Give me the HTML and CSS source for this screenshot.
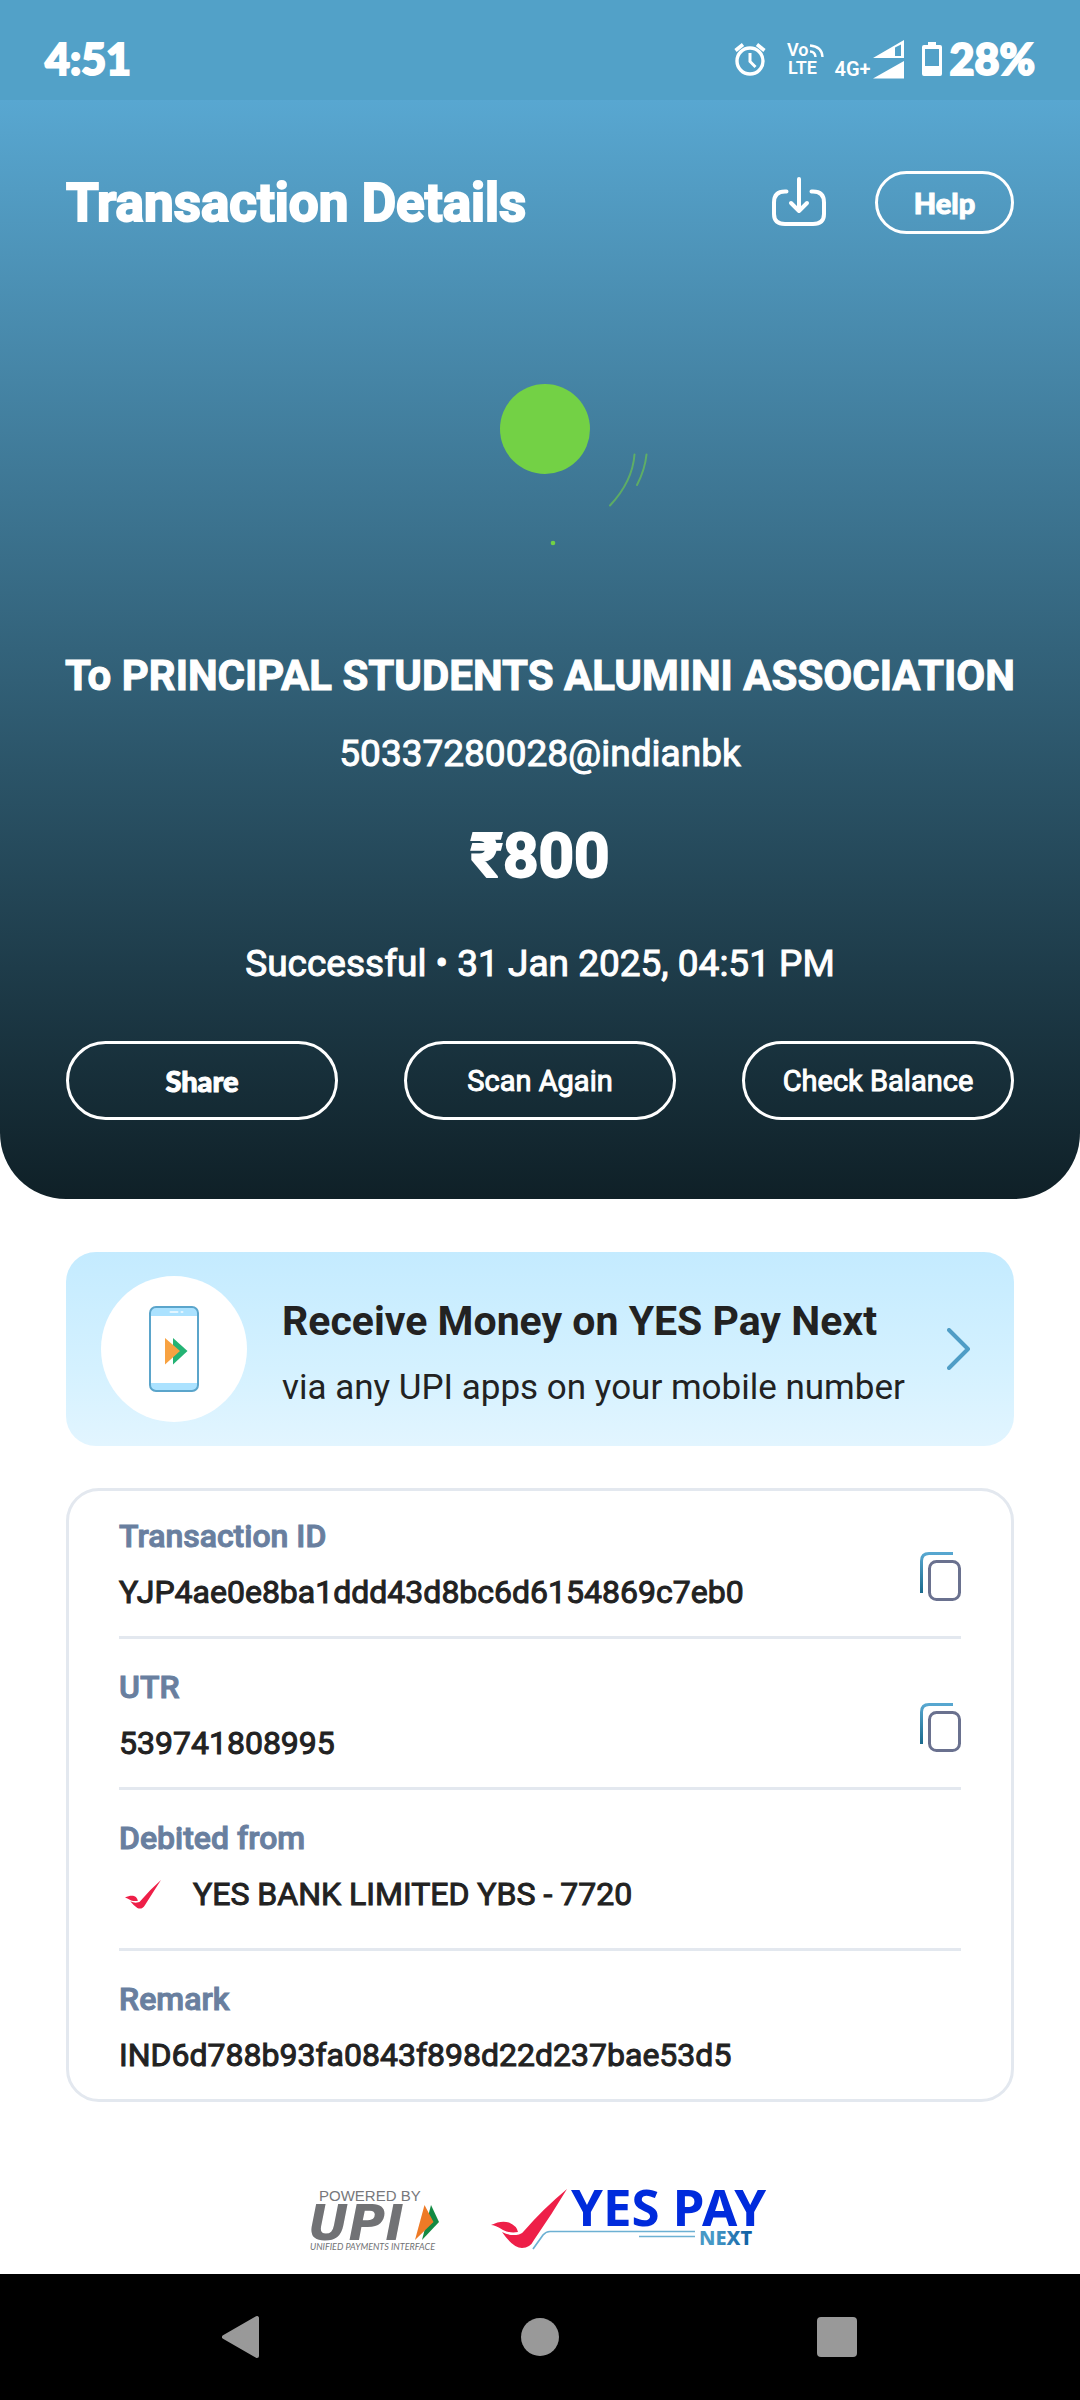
FILE: index.html
```html
<!DOCTYPE html>
<html lang="en">
<head>
<meta charset="utf-8">
<meta name="viewport" content="width=device-width, initial-scale=1">
<title>Transaction Details</title>
<link rel="stylesheet" href="styles.css">
</head>
<body>
<div class="status-bar">
  <span class="status-time">4:51</span>
  <div class="status-icons">
    <svg class="icon-alarm" viewBox="0 0 32 34" width="32" height="34" fill="none" stroke="#fff" aria-hidden="true">
      <circle cx="16" cy="19" r="13" stroke-width="3.4"/>
      <path d="M16 11v8.500l5.500 5.500" stroke-width="3"/>
      <path d="M1.500 8.500l7.500-6M30.500 8.500l-7.500-6" stroke-width="3.600"/>
    </svg>
    <svg class="icon-volte" viewBox="0 0 37 36" width="37" height="36" aria-hidden="true">
      <g fill="#fff" class="volte-text"><text x="0" y="15">Vo</text><text x="1" y="33">LTE</text></g>
      <g fill="none" stroke="#fff" stroke-width="2.400"><path d="M23 10.500q5 0 5.500 5.500M23 4.500q12 1 12.500 11.500"/></g>
    </svg>
    <span class="network">4G+</span>
    <svg class="icon-signal" viewBox="0 0 31 39" width="31" height="39" aria-hidden="true">
      <path fill="#fff" fill-rule="evenodd" d="M0 18L31 0v18zM22 7.500V16h6V4.500zM0 38.500L31 21v17.500z"/>
    </svg>
    <svg class="icon-battery" viewBox="0 0 20 34" width="20" height="34" aria-hidden="true">
      <path fill="#fff" fill-rule="evenodd" d="M6 0h8v3h4a2 2 0 0 1 2 2v27a2 2 0 0 1-2 2H2a2 2 0 0 1-2-2V5a2 2 0 0 1 2-2h4zM3 7v17h14V7z"/>
    </svg>
    <span class="battery-level">28%</span>
  </div>
</div>

<header class="hero">
  <div class="title-row">
    <h1 class="title">Transaction Details</h1>
    <button class="icon-button" type="button" aria-label="Download receipt">
      <svg viewBox="0 0 54 50" width="54" height="50" fill="none" stroke="#fff" stroke-width="4" stroke-linecap="round" stroke-linejoin="round" aria-hidden="true">
        <path d="M14.500 14.500H13q-11 0-11 11V37q0 10 11 10h28q11 0 11-10V25.500q0-11-11-11h-1.500"/>
        <path d="M27 2v32M19 26l8 8 8-8"/>
      </svg>
    </button>
    <button class="pill pill-help" type="button">Help</button>
  </div>

  <svg class="burst" viewBox="0 0 240 200" width="240" height="200" aria-hidden="true">
    <circle cx="125" cy="69" r="45" fill="#73d145"/>
    <g fill="none" stroke="#73d145" stroke-opacity=".6" stroke-width="2" stroke-linecap="round">
      <path d="M214.500 94.500q-2 27-24.500 51"/>
      <path d="M226.500 94.500q-1.500 15-9.500 30.500"/>
    </g>
    <circle cx="133" cy="183" r="2.300" fill="#73d145"/>
  </svg>

  <p class="payee">To PRINCIPAL STUDENTS ALUMINI ASSOCIATION</p>
  <p class="vpa">50337280028@indianbk</p>
  <p class="amount">₹800</p>
  <p class="status">Successful • 31 Jan 2025, 04:51 PM</p>

  <div class="actions">
    <button class="pill pill-strong" type="button">Share</button>
    <button class="pill" type="button">Scan Again</button>
    <button class="pill" type="button">Check Balance</button>
  </div>
</header>

<main class="content">
  <a class="promo" href="#receive">
    <span class="promo-badge">
      <svg viewBox="0 0 50 86" width="50" height="86" aria-hidden="true">
        <rect x="1" y="1" width="48" height="84" rx="6" fill="#abe2ff"/>
        <path fill="#fff" d="M1 10h48v67H1z"/>
        <rect x="1" y="1" width="48" height="84" rx="6" fill="none" stroke="#5ba5cb" stroke-width="2"/>
        <path d="M21.500 6h7M32.500 6h1" stroke="#e2f5ff" stroke-width="2" stroke-linecap="round"/>
        <path fill="#24b374" d="M24 32l14.500 13L24 58.500z"/>
        <path fill="#f8a241" d="M16 32l15 13-15 13.500z"/>
      </svg>
    </span>
    <span class="promo-text">
      <strong class="promo-title">Receive Money on YES Pay Next</strong>
      <span class="promo-sub">via any UPI apps on your mobile number</span>
    </span>
    <svg class="chevron" viewBox="0 0 24 42" width="24" height="42" fill="none" stroke="#4f9dc6" stroke-width="4" stroke-linecap="round" stroke-linejoin="round" aria-hidden="true"><path d="M2 2l19 19L2 40"/></svg>
  </a>

  <svg class="defs" width="0" height="0" aria-hidden="true">
    <linearGradient id="fold" x1="0" y1="0" x2="0" y2="1"><stop offset="0" stop-color="#57a7d0"/><stop offset="1" stop-color="#1b6a8c"/></linearGradient>
  </svg>

  <dl class="details">
    <div class="detail">
      <div>
        <dt>Transaction ID</dt>
        <dd>YJP4ae0e8ba1ddd43d8bc6d6154869c7eb0</dd>
      </div>
      <button class="icon-button" type="button" aria-label="Copy transaction ID">
        <svg viewBox="0 0 41 49" width="41" height="49" fill="none" stroke-width="3" aria-hidden="true">
          <path stroke="url(#fold)" d="M1.500 41V9q0-7.500 7.500-7.500h24"/>
          <rect x="9.500" y="9.500" width="30" height="38" rx="7" stroke="#6a718f"/>
        </svg>
      </button>
    </div>
    <div class="detail">
      <div>
        <dt>UTR</dt>
        <dd>539741808995</dd>
      </div>
      <button class="icon-button" type="button" aria-label="Copy UTR">
        <svg viewBox="0 0 41 49" width="41" height="49" fill="none" stroke-width="3" aria-hidden="true">
          <path stroke="url(#fold)" d="M1.500 41V9q0-7.500 7.500-7.500h24"/>
          <rect x="9.500" y="9.500" width="30" height="38" rx="7" stroke="#6a718f"/>
        </svg>
      </button>
    </div>
    <div class="detail detail-bank">
      <div>
        <dt>Debited from</dt>
        <dd class="bank">
          <svg class="bank-logo" viewBox="0 0 76 61" width="36" height="29" aria-hidden="true"><path fill="#ee1f48" d="M0 37C10 32 18 32 23 36q4 4 4 8-8 1-14-1Q4 38 0 37zM11 45q9 4 17 2 3 0 4-2Q52 21 76 0 58 28 42 53q-6 10-16 6-7-4-15-14z"/></svg>
          YES BANK LIMITED YBS - 7720
        </dd>
      </div>
    </div>
    <div class="detail">
      <div>
        <dt>Remark</dt>
        <dd>IND6d788b93fa0843f898d22d237bae53d5</dd>
      </div>
    </div>
  </dl>
</main>

<footer class="brands">
  <svg viewBox="0 0 130 62" width="130" height="62" role="img" aria-label="Powered by UPI, Unified Payments Interface">
    <text class="powered" x="9" y="12">POWERED BY</text>
    <text class="upi" x="-2" y="51">UPI</text>
    <path fill="#138a43" d="M121 16l8 17-17 18z"/>
    <path fill="#ee7a26" d="M114.500 16l9 17L105 51z"/>
    <text class="upi-full" x="0" y="61">UNIFIED PAYMENTS INTERFACE</text>
  </svg>
  <svg viewBox="0 0 278 62" width="278" height="62" role="img" aria-label="Yes Pay Next">
    <linearGradient id="next" x1="0" x2="1" y1="0" y2="0"><stop offset=".3" stop-color="#4799c6"/><stop offset="1" stop-color="#0a5aa0"/></linearGradient>
    <path fill="#ee1f48" d="M0 36Q10 31 18 33.500 26 37 27 43q-8 1.500-15-2Q4 36 0 36zM11 43q8 4.500 17 2.500 3-.5 5-3.500Q52 20 76 0 61 25 43 51q-4 8-12 8-9 0-20-16z"/>
    <path fill="none" stroke="#6db1d3" stroke-width="1.700" d="M42 60l10-14q3-3.500 7-3.500h145M148 47.500h56"/>
    <text class="yes-pay" x="80" y="37">YES PAY</text>
    <text class="next" x="208" y="56" fill="url(#next)">NEXT</text>
  </svg>
</footer>

<nav class="nav-bar">
  <button class="icon-button" type="button" aria-label="Back"><svg viewBox="0 0 42 44" width="42" height="44" aria-hidden="true"><path fill="#999" stroke="#999" stroke-width="4" stroke-linejoin="round" d="M2 22L35 3v38z"/></svg></button>
  <button class="icon-button" type="button" aria-label="Home"><svg viewBox="0 0 42 44" width="42" height="44" aria-hidden="true"><circle cx="21" cy="22" r="19" fill="#999"/></svg></button>
  <button class="icon-button" type="button" aria-label="Recent apps"><svg viewBox="0 0 42 44" width="42" height="44" aria-hidden="true"><rect x="1" y="2" width="40" height="40" rx="4" fill="#999"/></svg></button>
</nav>
</body>
</html>
```

FILE: styles.css
```css
* {
  box-sizing: border-box;
}

body {
  margin: 0;
  min-height: 100vh;
  display: flex;
  flex-direction: column;
  background: #fff;
  color: #222;
  font-family: Roboto, "Liberation Sans", sans-serif;
}

h1, p, dl, dd {
  margin: 0;
}

svg {
  display: block;
}

button {
  padding: 0;
  border: 0;
  background: none;
  color: inherit;
  font: inherit;
}

.defs {
  position: absolute;
}

/* Status bar */

.status-bar {
  display: flex;
  align-items: center;
  justify-content: space-between;
  height: 100px;
  padding: 18px 45px 0;
  background: #52a1c8;
  color: #fff;
}

.status-time,
.battery-level {
  font: 900 43px/50px Lato, sans-serif;
  -webkit-text-stroke: 2px;
}

.status-icons {
  display: flex;
  align-items: center;
}

.icon-volte {
  margin-left: 21px;
  overflow: visible;
}

.volte-text {
  font: 600 18px/18px Roboto, sans-serif;
}

.network {
  margin-left: 10px;
  padding-top: 20px;
  font: 600 20px/24px Roboto, sans-serif;
}

.icon-signal {
  margin-left: 2px;
}

.icon-battery {
  margin: 0 8px 0 18px;
}

/* Header */

.hero {
  display: flex;
  flex-direction: column;
  align-items: center;
  padding: 70px 66px 79px;
  border-radius: 0 0 66px 66px;
  background: linear-gradient(#58a7d1, #2b5468 61%, #0f2027);
  color: #fff;
  text-align: center;
}

.title-row {
  display: flex;
  align-items: center;
  align-self: stretch;
}

.title {
  flex: 1;
  padding-top: 2px;
  text-align: left;
  font-size: 53px;
  line-height: 62px;
  font-weight: 700;
  -webkit-text-stroke: 2px;
}

.pill {
  flex: 1;
  height: 79px;
  border: 3px solid #fff;
  border-radius: 40px;
  font-size: 29px;
  -webkit-text-stroke: 1px;
}

.pill-strong,
.pill-help {
  font-family: Lato, sans-serif;
  font-weight: 900;
}

.pill-help {
  flex: none;
  width: 139px;
  height: 63px;
  margin-left: 49px;
}

.burst {
  margin-top: 126px;
}

.payee {
  margin-top: 91px;
  font-size: 42px;
  line-height: 50px;
  font-weight: 700;
  white-space: nowrap;
  -webkit-text-stroke: 1px;
}

.vpa,
.status {
  font-size: 37px;
  line-height: 44px;
  -webkit-text-stroke: 1px;
}

.vpa {
  margin-top: 31px;
}

.amount {
  margin-top: 43px;
  font-size: 62px;
  line-height: 74px;
  font-weight: 700;
  -webkit-text-stroke: 2px;
}

.status {
  margin-top: 49px;
}

.actions {
  display: flex;
  align-self: stretch;
  gap: 66px;
  margin-top: 55px;
}

/* Content */

.content {
  flex: 1;
  padding: 53px 66px 0;
}

.promo {
  display: flex;
  align-items: center;
  height: 194px;
  padding: 0 43px 0 35px;
  border-radius: 30px;
  background: linear-gradient(#c4ebff, #d4f1ff 60%, #e2f5ff);
  color: #222;
  text-decoration: none;
}

.promo-badge {
  display: grid;
  place-items: center;
  flex: none;
  width: 146px;
  height: 146px;
  border-radius: 50%;
  background: #fff;
}

.promo-text {
  display: flex;
  flex: 1;
  flex-direction: column;
  gap: 20px;
  margin-left: 35px;
  padding-top: 9px;
}

.promo-title {
  font-size: 41px;
  line-height: 48px;
}

.promo-sub {
  font-size: 35px;
  line-height: 46px;
}

.details {
  margin-top: 42px;
  padding: 0 50px;
  border: 3px solid #e3e8ef;
  border-radius: 33px;
}

.detail {
  display: flex;
  align-items: center;
  justify-content: space-between;
  padding: 29px 0 25px;
  font-size: 32px;
  line-height: 38px;
}

.detail + .detail {
  border-top: 3px solid #e3e8ef;
}

.detail:first-child {
  padding-top: 26px;
}

.detail-bank {
  padding-bottom: 35px;
}

.detail dt {
  color: #697f9f;
  font-weight: 500;
  -webkit-text-stroke: 1px;
}

.detail dd {
  margin-top: 18px;
  -webkit-text-stroke: 1px;
}

.bank {
  display: flex;
  align-items: center;
  gap: 32px;
}

.bank-logo {
  margin-left: 6px;
}

.detail .icon-button {
  padding-top: 24px;
}

/* Brand logos */

.brands {
  display: flex;
  justify-content: center;
  gap: 51px;
  padding: 32px 2px 23px 0;
}

.brands svg {
  overflow: visible;
}

.powered {
  font: 15px/15px "Liberation Sans", sans-serif;
  fill: #77787b;
}

.upi {
  font: oblique 700 50px/50px "DejaVu Sans", sans-serif;
  fill: #717275;
}

.upi-full {
  font: italic 9px/9px Lato, sans-serif;
  fill: #717275;
}

.yes-pay {
  font: 700 51px/51px "Noto Sans", sans-serif;
  fill: #002bdc;
}

.next {
  font: 800 20px/20px "Noto Sans", sans-serif;
}

/* System navigation */

.nav-bar {
  display: flex;
  align-items: center;
  justify-content: space-between;
  height: 126px;
  padding: 0 222px;
  background: #000;
}
```
